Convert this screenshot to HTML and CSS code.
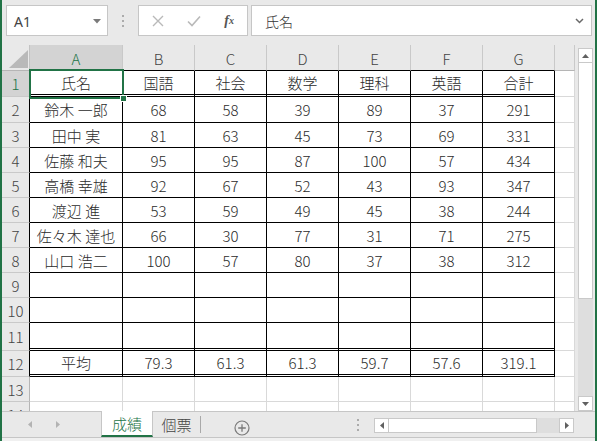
FILE: index.html
```html
<!DOCTYPE html>
<html lang="ja">
<head>
<meta charset="utf-8">
<title>成績</title>
<link rel="stylesheet" href="styles.css">
</head>
<body>
<div class="app">
  <div class="fbar">
    <div class="namebox"><span>A1</span><svg class="caret" width="8" height="5" viewBox="0 0 8 5"><path d="M0 0H8L4 4.5Z" fill="#7a7a7a"/></svg></div>
    <div class="grip"><i></i><i></i><i></i></div>
    <div class="fbtns">
      <span class="fslot"><svg width="12" height="12" viewBox="0 0 12 12"><path d="M1 1L11 11M11 1L1 11" stroke="#b9b9b9" stroke-width="1.4" fill="none"/></svg></span>
      <span class="fslot"><svg width="14" height="12" viewBox="0 0 14 12"><path d="M1 6.5L5 10.5L13 1.5" stroke="#b9b9b9" stroke-width="1.6" fill="none"/></svg></span>
      <span class="fslot fx"><i>f</i><sub>x</sub></span>
    </div>
    <div class="finput"><span>氏名</span><svg class="chev" width="9" height="6" viewBox="0 0 9 6"><path d="M1 1L4.5 4.5L8 1" stroke="#6a6a6a" stroke-width="1.5" fill="none"/></svg></div>
  </div>
  <div class="main">
    <div class="grid">
      <div class="sheet">
        <div class="corner"><svg width="19" height="18" viewBox="0 0 19 18"><path d="M19 0V18H0Z" fill="#b9b9b9"/></svg></div>
        <div class="ch k on">A</div><div class="ch k">B</div><div class="ch k">C</div><div class="ch k">D</div><div class="ch k">E</div><div class="ch k">F</div><div class="ch k">G</div><div class="ch"></div>

        <div class="rh rk on">1</div><div class="c k dbl">氏名</div><div class="c k dbl">国語</div><div class="c k dbl">社会</div><div class="c k dbl">数学</div><div class="c k dbl">理科</div><div class="c k dbl">英語</div><div class="c k dbl">合計</div><div class="c"></div>

        <div class="rh rk">2</div><div class="c k">鈴木 一郎</div><div class="c k">68</div><div class="c k">58</div><div class="c k">39</div><div class="c k">89</div><div class="c k">37</div><div class="c k">291</div><div class="c"></div>

        <div class="rh rk">3</div><div class="c k">田中 実</div><div class="c k">81</div><div class="c k">63</div><div class="c k">45</div><div class="c k">73</div><div class="c k">69</div><div class="c k">331</div><div class="c"></div>

        <div class="rh rk">4</div><div class="c k">佐藤 和夫</div><div class="c k">95</div><div class="c k">95</div><div class="c k">87</div><div class="c k">100</div><div class="c k">57</div><div class="c k">434</div><div class="c"></div>

        <div class="rh rk">5</div><div class="c k">高橋 幸雄</div><div class="c k">92</div><div class="c k">67</div><div class="c k">52</div><div class="c k">43</div><div class="c k">93</div><div class="c k">347</div><div class="c"></div>

        <div class="rh rk">6</div><div class="c k">渡辺 進</div><div class="c k">53</div><div class="c k">59</div><div class="c k">49</div><div class="c k">45</div><div class="c k">38</div><div class="c k">244</div><div class="c"></div>

        <div class="rh rk">7</div><div class="c k">佐々木 達也</div><div class="c k">66</div><div class="c k">30</div><div class="c k">77</div><div class="c k">31</div><div class="c k">71</div><div class="c k">275</div><div class="c"></div>

        <div class="rh rk">8</div><div class="c k">山口 浩二</div><div class="c k">100</div><div class="c k">57</div><div class="c k">80</div><div class="c k">37</div><div class="c k">38</div><div class="c k">312</div><div class="c"></div>

        <div class="rh rk">9</div><div class="c k"></div><div class="c k"></div><div class="c k"></div><div class="c k"></div><div class="c k"></div><div class="c k"></div><div class="c k"></div><div class="c"></div>

        <div class="rh rk">10</div><div class="c k"></div><div class="c k"></div><div class="c k"></div><div class="c k"></div><div class="c k"></div><div class="c k"></div><div class="c k"></div><div class="c"></div>

        <div class="rh rk">11</div><div class="c k dbl"></div><div class="c k dbl"></div><div class="c k dbl"></div><div class="c k dbl"></div><div class="c k dbl"></div><div class="c k dbl"></div><div class="c k dbl"></div><div class="c"></div>

        <div class="rh rk">12</div><div class="c k dbl">平均</div><div class="c k dbl">79.3</div><div class="c k dbl">61.3</div><div class="c k dbl">61.3</div><div class="c k dbl">59.7</div><div class="c k dbl">57.6</div><div class="c k dbl">319.1</div><div class="c"></div>

        <div class="rh">13</div><div class="c"></div><div class="c"></div><div class="c"></div><div class="c"></div><div class="c"></div><div class="c"></div><div class="c"></div><div class="c"></div>

        <div class="rh rcut">14</div><div class="c"></div><div class="c"></div><div class="c"></div><div class="c"></div><div class="c"></div><div class="c"></div><div class="c"></div><div class="c"></div>
      </div>
      <div class="sel"><div class="handle"></div></div>
    </div>
    <div class="vscroll">
      <div class="sbtn"><svg width="7" height="4" viewBox="0 0 7 4"><path d="M0 4H7L3.5 0Z" fill="#606060"/></svg></div>
      <div class="vthumb"></div>
      <div class="vtrack"></div>
      <div class="sbtn"><svg width="7" height="4" viewBox="0 0 7 4"><path d="M0 0H7L3.5 4Z" fill="#606060"/></svg></div>
    </div>
  </div>
  <div class="tabbar">
    <div class="tabnav">
      <svg width="4" height="7" viewBox="0 0 4 7"><path d="M4 0V7L0 3.5Z" fill="#b3b3b3"/></svg>
      <svg width="4" height="7" viewBox="0 0 4 7"><path d="M0 0V7L4 3.5Z" fill="#b3b3b3"/></svg>
    </div>
    <div class="tab active">成績</div>
    <div class="tab">個票</div>
    <div class="tabsep"></div>
    <div class="addsheet"><svg width="16" height="16" viewBox="0 0 16 16"><circle cx="8" cy="8" r="7" stroke="#7a7a7a" stroke-width="1.2" fill="none"/><path d="M8 4.2V11.8M4.2 8H11.8" stroke="#7a7a7a" stroke-width="1.3"/></svg></div>
    <div class="spacer"></div>
    <div class="hgrip"><i></i><i></i><i></i></div>
    <div class="hscroll">
      <div class="sbtn"><svg width="4" height="7" viewBox="0 0 4 7"><path d="M4 0V7L0 3.5Z" fill="#606060"/></svg></div>
      <div class="hthumb"></div>
      <div class="htrack"></div>
      <div class="sbtn"><svg width="4" height="7" viewBox="0 0 4 7"><path d="M0 0V7L4 3.5Z" fill="#606060"/></svg></div>
    </div>
    <div class="scorner"></div>
  </div>
  <div class="status"></div>
</div>
</body>
</html>
```

FILE: styles.css
```css
* { box-sizing: border-box; }
html, body { margin: 0; padding: 0; }
body {
  width: 597px;
  height: 441px;
  overflow: hidden;
  font-family: "Noto Sans CJK JP", "Noto Sans", sans-serif;
}
.app {
  width: 597px;
  height: 441px;
  border-left: 2px solid #217346;
  border-right: 2px solid #217346;
  background: #e9e9e9;
  display: flex;
  flex-direction: column;
}

/* formula bar */
.fbar {
  height: 45px;
  flex: none;
  display: flex;
  align-items: flex-start;
  padding: 5px 0 0 4px;
}
.namebox {
  width: 102px;
  height: 31px;
  background: #fff;
  border: 1px solid #c6c6c6;
  display: flex;
  align-items: center;
  justify-content: space-between;
  padding: 2px 6px 0 7px;
  font-family: "Noto Sans", sans-serif;
  font-size: 14px;
  color: #444;
}
.grip {
  width: 2px;
  margin: 10px 0 0 14px;
  display: flex;
  flex-direction: column;
  gap: 3px;
}
.grip i, .hgrip i {
  display: block;
  width: 2px;
  height: 2px;
  background: #ababab;
}
.fbtns {
  width: 110px;
  height: 31px;
  margin-left: 14px;
  background: #fff;
  border: 1px solid #c6c6c6;
  display: flex;
  align-items: center;
  padding-left: 1px;
}
.fslot {
  width: 36px;
  display: flex;
  justify-content: center;
  align-items: center;
}
.fx {
  font-family: "Liberation Serif", serif;
  font-style: italic;
  font-weight: bold;
  color: #555;
  font-size: 14px;
  line-height: 1;
}
.fx i { font-style: italic; }
.fx sub { font-size: 10px; vertical-align: -2px; }
.finput {
  width: 341px;
  height: 31px;
  margin-left: 3px;
  background: #fff;
  border: 1px solid #c6c6c6;
  display: flex;
  align-items: center;
  justify-content: space-between;
  padding: 0 7px 0 13px;
  font-size: 14px;
  font-weight: 300;
  color: #333;
}

/* sheet */
.main {
  height: 366px;
  flex: none;
  display: flex;
}
.grid {
  width: 573px;
  height: 366px;
  overflow: hidden;
  position: relative;
  background: #fff;
}
.sheet {
  display: grid;
  grid-template-columns: 28px 93px repeat(6, 72px) 20px;
  grid-template-rows: 26px 26px 26px repeat(8, 25px) 28px 26px 25px 25px;
}
.corner {
  background: #e9e9e9;
  border-right: 1px solid #c3c3c3;
  border-bottom: 1px solid #b5b5b5;
  display: flex;
  align-items: flex-end;
  justify-content: flex-end;
  padding: 0 1px 2px 0;
}
.ch {
  background: #e9e9e9;
  border-right: 1px solid #c9c9c9;
  border-bottom: 1px solid #b5b5b5;
  display: flex;
  align-items: center;
  justify-content: center;
  font-size: 15px;
  font-weight: 300;
  color: #444;
  padding-top: 1px;
}
.ch.k { border-bottom-color: #000; }
.ch.on, .rh.on { background: #d3d3d3; color: #217346; }
.rh {
  background: #e9e9e9;
  border-right: 1px solid #b5b5b5;
  border-bottom: 1px solid #c9c9c9;
  display: flex;
  align-items: center;
  justify-content: center;
  font-size: 15px;
  font-weight: 300;
  color: #444;
}
.rh.rk { border-right-color: #000; }
.rh.rcut { align-items: flex-start; padding-top: 2px; }
.c {
  border-right: 1px solid #d9d9d9;
  border-bottom: 1px solid #d9d9d9;
  display: flex;
  align-items: center;
  justify-content: center;
  font-size: 15px;
  font-weight: 300;
  color: #2b2b2b;
  white-space: nowrap;
}
.c.k { border-right-color: #000; border-bottom-color: #000; }
.c.dbl { border-bottom: 3px double #000; }
.sel {
  position: absolute;
  left: 27px;
  top: 24px;
  width: 95px;
  height: 30px;
  border: 2px solid #217346;
}
.handle {
  position: absolute;
  right: -5px;
  bottom: -5px;
  width: 7px;
  height: 7px;
  background: #217346;
  border: 1px solid #fff;
}

/* vertical scrollbar */
.vscroll {
  width: 20px;
  height: 366px;
  display: flex;
  flex-direction: column;
  padding: 3px 2px 0 3px;
  background: #e9e9e9;
}
.sbtn {
  width: 15px;
  height: 15px;
  flex: none;
  background: #fff;
  border: 1px solid #c9c9c9;
  display: flex;
  align-items: center;
  justify-content: center;
}
.vthumb {
  height: 236px;
  flex: none;
  background: #fff;
  border: 1px solid #c9c9c9;
  border-top: none;
}
.vtrack { flex: 1; background: #dedede; }

/* tab bar */
.tabbar {
  height: 26px;
  flex: none;
  border-top: 1px solid #c6c6c6;
  display: flex;
  align-items: flex-start;
}
.tabnav {
  width: 99px;
  height: 25px;
  display: flex;
  align-items: center;
  padding-left: 26px;
  gap: 24px;
}
.tab {
  height: 25px;
  display: flex;
  align-items: center;
  justify-content: center;
  font-size: 15px;
  font-weight: 300;
  color: #444;
  width: 47px;
}
.tab.active {
  width: 52px;
  height: 26px;
  margin-top: -1px;
  background: #fff;
  border-left: 1px solid #c6c6c6;
  border-right: 1px solid #c6c6c6;
  border-bottom: 2px solid #217346;
  color: #217346;
}
.tabsep {
  width: 1px;
  height: 17px;
  margin-top: 4px;
  background: #a9a9a9;
}
.addsheet {
  margin: 5px 0 0 33px;
  width: 16px;
  height: 16px;
}
.spacer { flex: 1; }
.hgrip {
  width: 2px;
  margin-top: 7px;
  display: flex;
  flex-direction: column;
  gap: 3px;
}
.hscroll {
  width: 200px;
  height: 15px;
  margin: 6px 0 0 15px;
  display: flex;
}
.hthumb {
  width: 148px;
  background: #fff;
  border: 1px solid #c9c9c9;
  border-left: none;
}
.htrack { flex: 1; background: #dedede; }
.scorner { width: 21px; height: 25px; }
.status {
  height: 4px;
  flex: none;
  border-top: 1px solid #c6c6c6;
  background: #f0f0f0;
}
```
